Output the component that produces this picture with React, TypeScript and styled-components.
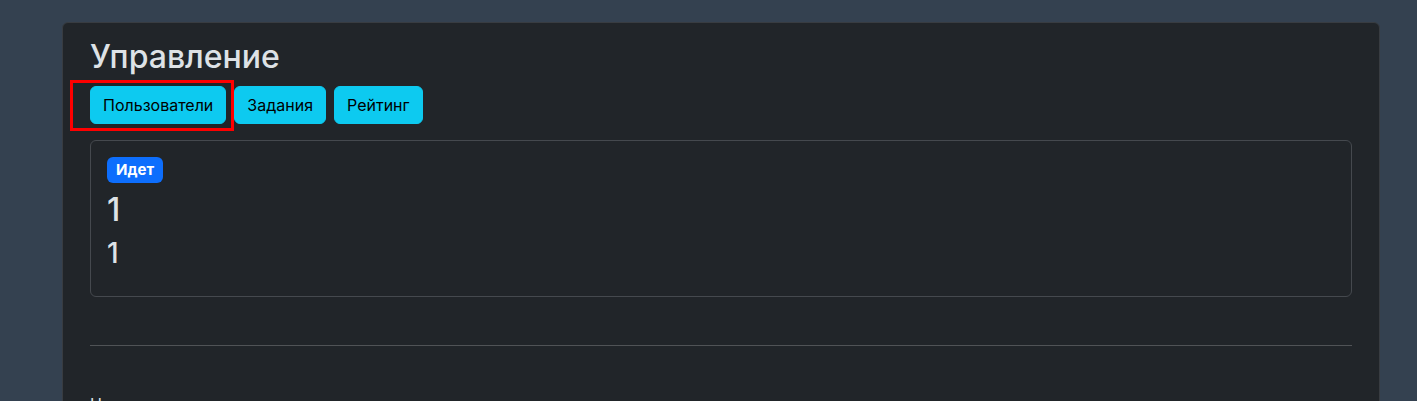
import React from "react";
import styled, { createGlobalStyle } from "styled-components";

const Global = createGlobalStyle`
  html, body { margin: 0; padding: 0; }
  body {
    background: #344150;
    font-family: Inter, "Noto Sans", sans-serif;
    color: #dee2e6;
    overflow: hidden;
  }
  * { box-sizing: border-box; }
`;

const Page = styled.div`
  padding: 22px 37px 0 62px;
  height: 401px;
  overflow: hidden;
`;

const Panel = styled.div`
  background: #212529;
  border: 1px solid #383c41;
  border-radius: 6px;
  padding: 15px 27px 40px;
  min-height: 420px;
`;

const Title = styled.h2`
  margin: 0 0 10px;
  font-size: 32px;
  font-weight: 500;
  line-height: 1.2;
  color: #dee2e6;
`;

const Toolbar = styled.div`
  display: flex;
  gap: 8px;
  margin-bottom: 16px;
`;

const ButtonWrap = styled.div`
  position: relative;
`;

const Highlight = styled.span`
  position: absolute;
  left: -20px;
  top: -6px;
  right: -8px;
  bottom: -7px;
  border: 3px solid #ff0000;
  pointer-events: none;
`;

const Button = styled.button`
  font-family: inherit;
  font-size: 16px;
  line-height: 24px;
  padding: 6px 12px;
  background: #0dcaf0;
  color: #000;
  border: 1px solid #0dcaf0;
  border-radius: 6px;
  cursor: pointer;
`;

const Card = styled.div`
  border: 1px solid #45494e;
  border-radius: 6px;
  padding: 16px 16px 25px;
  margin-bottom: 48px;
`;

const Heading = styled.div<{ $size: number }>`
  font-size: ${(p) => p.$size}px;
  font-weight: 500;
  line-height: 1.2;
  margin-bottom: 8px;
  color: #dee2e6;
  &:last-child { margin-bottom: 0; }
`;

const Badge = styled.span`
  display: inline-block;
  background: #0d6efd;
  color: #fff;
  font-size: 15px;
  font-weight: 700;
  line-height: 1;
  padding: 5px 9px 5.5px;
  border-radius: 6px;
  vertical-align: 1px;
`;

const Divider = styled.hr`
  margin: 0 0 48px;
  border: 0;
  border-top: 1px solid #505356;
`;

const Next = styled.div`
  font-size: 16px;
  color: #dee2e6;
  margin-top: 3px;
`;

export default function App() {
  return (
    <>
      <Global />
      <Page>
        <Panel>
          <Title>Управление</Title>
          <Toolbar>
            <ButtonWrap>
              <Button>Пользователи</Button>
              <Highlight />
            </ButtonWrap>
            <Button>Задания</Button>
            <Button>Рейтинг</Button>
          </Toolbar>
          <Card>
            <Heading $size={20}>
              <Badge>Идет</Badge>
            </Heading>
            <Heading $size={32}>1</Heading>
            <Heading $size={28}>1</Heading>
          </Card>
          <Divider />
          <Next>Название</Next>
        </Panel>
      </Page>
    </>
  );
}
